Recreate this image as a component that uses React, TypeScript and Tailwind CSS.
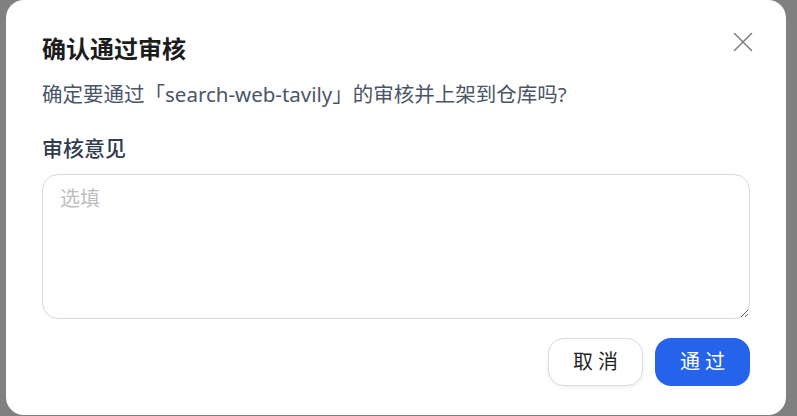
import React from "react";

const ReviewDialog: React.FC = () => {
  return (
    <div className="w-[780px] h-[415px] bg-white rounded-[18px] px-9 pt-[33px] pb-[29px] flex flex-col relative">
      <div className="flex items-start justify-between">
        <h2 className="text-[24px] leading-8 font-bold text-[#1c1c1c]">确认通过审核</h2>
        <button className="mt-[-3px] mr-[-5px] w-6 h-6 flex items-center justify-center text-[#808080]">
          <svg width="20" height="20" viewBox="0 0 20 20" fill="none" stroke="currentColor" strokeWidth="1.6" strokeLinecap="round">
            <path d="M1.5 1.5 L18.5 18.5 M18.5 1.5 L1.5 18.5" />
          </svg>
        </button>
      </div>
      <p className="mt-[15px] text-[20.5px] leading-7 text-[#4a5568]">
        确定要通过「search-web-tavily」的审核并上架到仓库吗?
      </p>
      <label className="mt-[26px] text-[21px] leading-7 font-medium text-[#2f3b4f]">审核意见</label>
      <textarea
        placeholder="选填"
        className="mt-3 h-[145px] w-full rounded-2xl border border-[#d9d9d9] px-[17px] py-[10px] text-[20px] leading-7 text-[#1c1c1c] placeholder:text-[#bdbdbd] outline-none"
      />
      <div className="mt-[19px] flex justify-end gap-3">
        <button className="w-[95px] h-12 rounded-2xl border border-[#dcdcdc] bg-white text-[20px] tracking-[0.25em] pl-[5px] text-[#1f1f1f] shadow-[0_2px_4px_rgba(0,0,0,0.06)]">
          取消
        </button>
        <button className="w-[95px] h-12 rounded-2xl bg-[#2563eb] text-[20px] tracking-[0.25em] pl-[5px] text-white">
          通过
        </button>
      </div>
    </div>
  );
};

export default function App() {
  return (
    <div
      className="w-full h-[416px] bg-[#808080] pl-[6px] overflow-hidden"
      style={{ fontFamily: '"Noto Sans", "Noto Sans CJK SC", sans-serif' }}
    >
      <ReviewDialog />
    </div>
  );
}
